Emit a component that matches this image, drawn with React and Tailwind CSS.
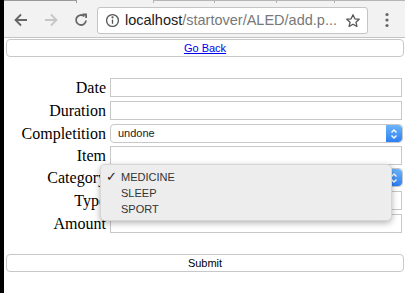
import React from 'react';

const rows = [
  { label: 'Date', kind: 'input', h: 'h-[23px]' },
  { label: 'Duration', kind: 'input', h: 'h-[23px]' },
  { label: 'Completition', kind: 'select', value: 'undone', h: 'h-[22px]' },
  { label: 'Item', kind: 'input', h: 'h-[22px]' },
  { label: 'Category', kind: 'select', value: 'MEDICINE', h: 'h-[23px]' },
  { label: 'Type', kind: 'input', h: 'h-[23px]' },
  { label: 'Amount', kind: 'input', h: 'h-[23px]' },
];

function BrowserBar() {
  return (
    <div className="h-[38px] shrink-0 bg-[#f2f2f2] border-b border-[#c4c4c4] flex flex-col">
      {/* tab strip edges */}
      <div className="h-[3px] flex">
        <div className="w-[73px] border-t border-r border-[#9a9a9a]" />
        <div className="w-[76px]" />
        <div className="w-[62px] border-t border-l border-r border-[#b5b5b5]" />
        <div className="w-[62px] border-t border-r border-[#b5b5b5]" />
        <div className="w-[58px] border-t border-r border-[#b5b5b5]" />
        <div className="flex-1 border-t border-[#b5b5b5]" />
      </div>
      <div className="flex-1 flex items-center">
        <div className="w-[93px] flex items-center pl-[9px] gap-[14px]">
          <svg width="16" height="16" viewBox="0 0 16 16" fill="none" stroke="#666" strokeWidth="1.8">
            <path d="M14 8H2.5M8 2.5L2.5 8L8 13.5" />
          </svg>
          <svg width="16" height="16" viewBox="0 0 16 16" fill="none" stroke="#c6c6c6" strokeWidth="1.8">
            <path d="M2 8h11.5M8 2.5L13.5 8L8 13.5" />
          </svg>
          <svg width="16" height="16" viewBox="0 0 16 16" fill="none" stroke="#666" strokeWidth="1.8">
            <path d="M13 8.5A5 5 0 1 1 11.4 4.3" />
            <path d="M9.5 2.5h3.6v3.6" fill="none" />
          </svg>
        </div>
        <div className="w-[271px] h-[27px] bg-white border border-[#c4c4c4] rounded-[3px] flex items-center pl-[7px] pr-[6px] mt-[1px]">
          <svg width="15" height="15" viewBox="0 0 16 16" fill="none" stroke="#555" strokeWidth="1.4">
            <circle cx="8" cy="8" r="6.3" />
            <path d="M8 7v4.5" />
            <circle cx="8" cy="4.6" r="0.5" fill="#555" />
          </svg>
          <span className="ml-[5px] font-['Liberation_Sans',Arial,sans-serif] text-[14.5px] leading-none text-[#202020]">
            localhost<span className="text-[#787878]">/startover/ALED/add.p...</span>
          </span>
          <svg className="ml-auto" width="16" height="16" viewBox="0 0 16 16" fill="none" stroke="#555" strokeWidth="1.3" strokeLinejoin="round">
            <path d="M8 1.8l1.85 4 4.35.45-3.25 2.9.95 4.3L8 11.2l-3.9 2.25.95-4.3L1.8 6.25l4.35-.45z" />
          </svg>
        </div>
        <div className="flex-1 flex justify-center">
          <svg width="4" height="16" viewBox="0 0 4 16" fill="#666">
            <circle cx="2" cy="2.5" r="1.6" />
            <circle cx="2" cy="8" r="1.6" />
            <circle cx="2" cy="13.5" r="1.6" />
          </svg>
        </div>
      </div>
    </div>
  );
}

function SelectArrow() {
  return (
    <div className="w-[16px] h-full rounded-r-[4px] bg-gradient-to-b from-[#6cb4fb] to-[#2b7ff2] flex items-center justify-center">
      <svg width="8" height="12" viewBox="0 0 8 12" fill="none" stroke="white" strokeWidth="1.4">
        <path d="M1.5 4.5L4 2L6.5 4.5M1.5 7.5L4 10L6.5 7.5" />
      </svg>
    </div>
  );
}

export default function App() {
  return (
    <div className="flex w-[405px] h-[293px] overflow-hidden bg-white">
      <div className="w-[4px] shrink-0 bg-black" />
      <div className="flex-1 flex flex-col">
        <BrowserBar />
        <main className="relative flex-1 pl-[2px] pr-[1px] font-['Liberation_Sans',Arial,sans-serif]">
          <div className="pt-[1px]">
            <button className="w-full h-[18px] bg-white border border-[#c8c8c8] rounded-[4px] flex items-center justify-center">
              <a href="#" className="text-[11px] leading-none text-[#0000ee] underline">Go Back</a>
            </button>
          </div>

          <form className="mt-[21px] flex flex-col">
            {rows.map((r) => (
              <div key={r.label} className={`${r.h} flex items-start`}>
                <label className="w-[100px] h-[19px] flex items-center justify-end font-['Liberation_Serif','Times_New_Roman',serif] text-[16px] text-black">
                  {r.label}
                </label>
                {r.kind === 'input' ? (
                  <div className="ml-[4px] mr-[2px] flex-1 h-[19px] border border-[#c8c8c8] bg-white" />
                ) : (
                  <div className="ml-[4px] mr-[1px] flex-1 h-[19px] border border-[#c8c8c8] rounded-[4px] bg-white flex items-center overflow-hidden">
                    <span className="flex-1 pl-[7px] text-[11px] text-[#222]">{r.value}</span>
                    <SelectArrow />
                  </div>
                )}
              </div>
            ))}
          </form>

          <div className="mt-[17px]">
            <button className="w-full h-[18px] bg-white border border-[#c8c8c8] rounded-[4px] flex items-center justify-center text-[11px] leading-none text-black">
              Submit
            </button>
          </div>

          {/* open category dropdown */}
          <div className="absolute left-[96px] top-[126px] w-[292px] h-[57px] bg-[#ededed] rounded-[5px] shadow-[0_2px_6px_rgba(0,0,0,0.3)] border border-[#d6d6d6] pt-[4px] text-[11px] text-[#333]">
            <div className="h-[16px] flex items-center">
              <span className="w-[20px] pl-[5px] text-[13px] text-[#222]">✓</span>
              <span>MEDICINE</span>
            </div>
            <div className="h-[16px] flex items-center pl-[20px]">SLEEP</div>
            <div className="h-[16px] flex items-center pl-[20px]">SPORT</div>
          </div>
        </main>
      </div>
    </div>
  );
}
